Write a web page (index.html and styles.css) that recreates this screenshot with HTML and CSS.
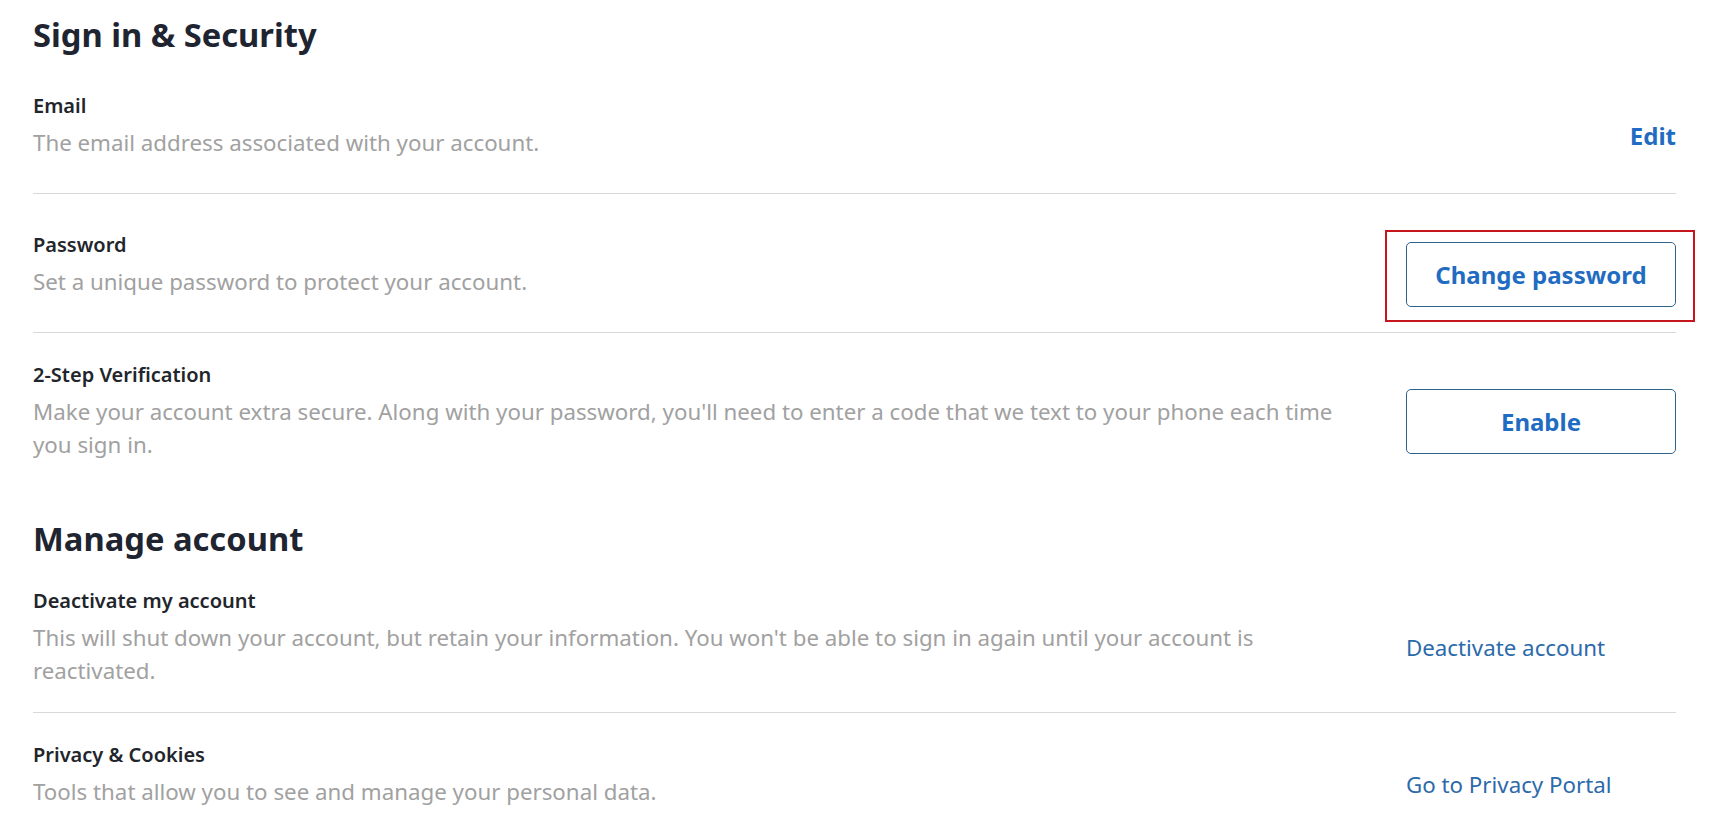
FILE: index.html
```html
<!DOCTYPE html>
<html lang="en">
<head>
<meta charset="utf-8">
<title>Sign in &amp; Security</title>
<link rel="stylesheet" href="styles.css">
</head>
<body>
<main class="page">
  <section class="section">
    <h2 class="section-title">Sign in &amp; Security</h2>

    <div class="row divided">
      <div class="info">
        <div class="label">Email</div>
        <div class="desc">The email address associated with your account.</div>
      </div>
      <div class="action">
        <a class="ctl edit" href="#">Edit</a>
      </div>
    </div>

    <div class="row divided">
      <div class="info">
        <div class="label">Password</div>
        <div class="desc">Set a unique password to protect your account.</div>
      </div>
      <div class="action">
        <div class="highlight">
          <a class="ctl btn" href="#">Change password</a>
        </div>
      </div>
    </div>

    <div class="row">
      <div class="info">
        <div class="label">2-Step Verification</div>
        <div class="desc">Make your account extra secure. Along with your password, you'll need to enter a code that we text to your phone each time you sign in.</div>
      </div>
      <div class="action">
        <a class="ctl btn" href="#">Enable</a>
      </div>
    </div>
  </section>

  <section class="section">
    <h2 class="section-title">Manage account</h2>

    <div class="row divided">
      <div class="info">
        <div class="label">Deactivate my account</div>
        <div class="desc">This will shut down your account, but retain your information. You won't be able to sign in again until your account is reactivated.</div>
      </div>
      <div class="action">
        <a class="link" href="#">Deactivate account</a>
      </div>
    </div>

    <div class="row">
      <div class="info">
        <div class="label">Privacy &amp; Cookies</div>
        <div class="desc">Tools that allow you to see and manage your personal data.</div>
      </div>
      <div class="action">
        <a class="link" href="#">Go to Privacy Portal</a>
      </div>
    </div>
  </section>
</main>
</body>
</html>
```

FILE: styles.css
```css
html, body {
  margin: 0;
  background: #ffffff;
}

body {
  font-family: "Noto Sans", "Open Sans", "DejaVu Sans", sans-serif;
  color: #23262d;
}

.page {
  padding: 14px 37px 0 33px;
}

.section + .section {
  margin-top: 32px;
}

.section-title {
  margin: 0;
  font-size: 32.7px;
  line-height: 41px;
  font-weight: 700;
  color: #1f2431;
}

.row {
  display: flex;
  align-items: center;
  padding: 25px 0 25px;
}

.row.divided {
  border-bottom: 1px solid #d8d8d8;
}

.info {
  flex: 1 1 auto;
  min-width: 0;
  padding-right: 60px;
}

.label {
  font-size: 20px;
  line-height: 34px;
  font-weight: 600;
  margin-bottom: 3px;
  color: #22252b;
}

.desc {
  font-size: 22.3px;
  line-height: 33px;
  color: #a1a1a1;
}

.action {
  flex: 0 0 270px;
  width: 270px;
  padding-top: 23px;
}

.ctl {
  box-sizing: border-box;
  height: 65px;
  display: flex;
  align-items: center;
  text-decoration: none;
  font-size: 24px;
  font-weight: 700;
  color: #1f6cc2;
}

.edit {
  justify-content: flex-end;
}

.btn {
  justify-content: center;
  border: 1px solid #2d648e;
  border-radius: 5px;
  background: #ffffff;
}

.link {
  display: block;
  font-size: 22.3px;
  line-height: 33px;
  font-weight: 400;
  color: #2d6aa9;
  text-decoration: none;
}

.highlight {
  position: relative;
}

.highlight::after {
  content: "";
  position: absolute;
  left: -21px;
  right: -19px;
  top: -12px;
  bottom: -15px;
  border: 2px solid #c5161d;
  pointer-events: none;
}
```
